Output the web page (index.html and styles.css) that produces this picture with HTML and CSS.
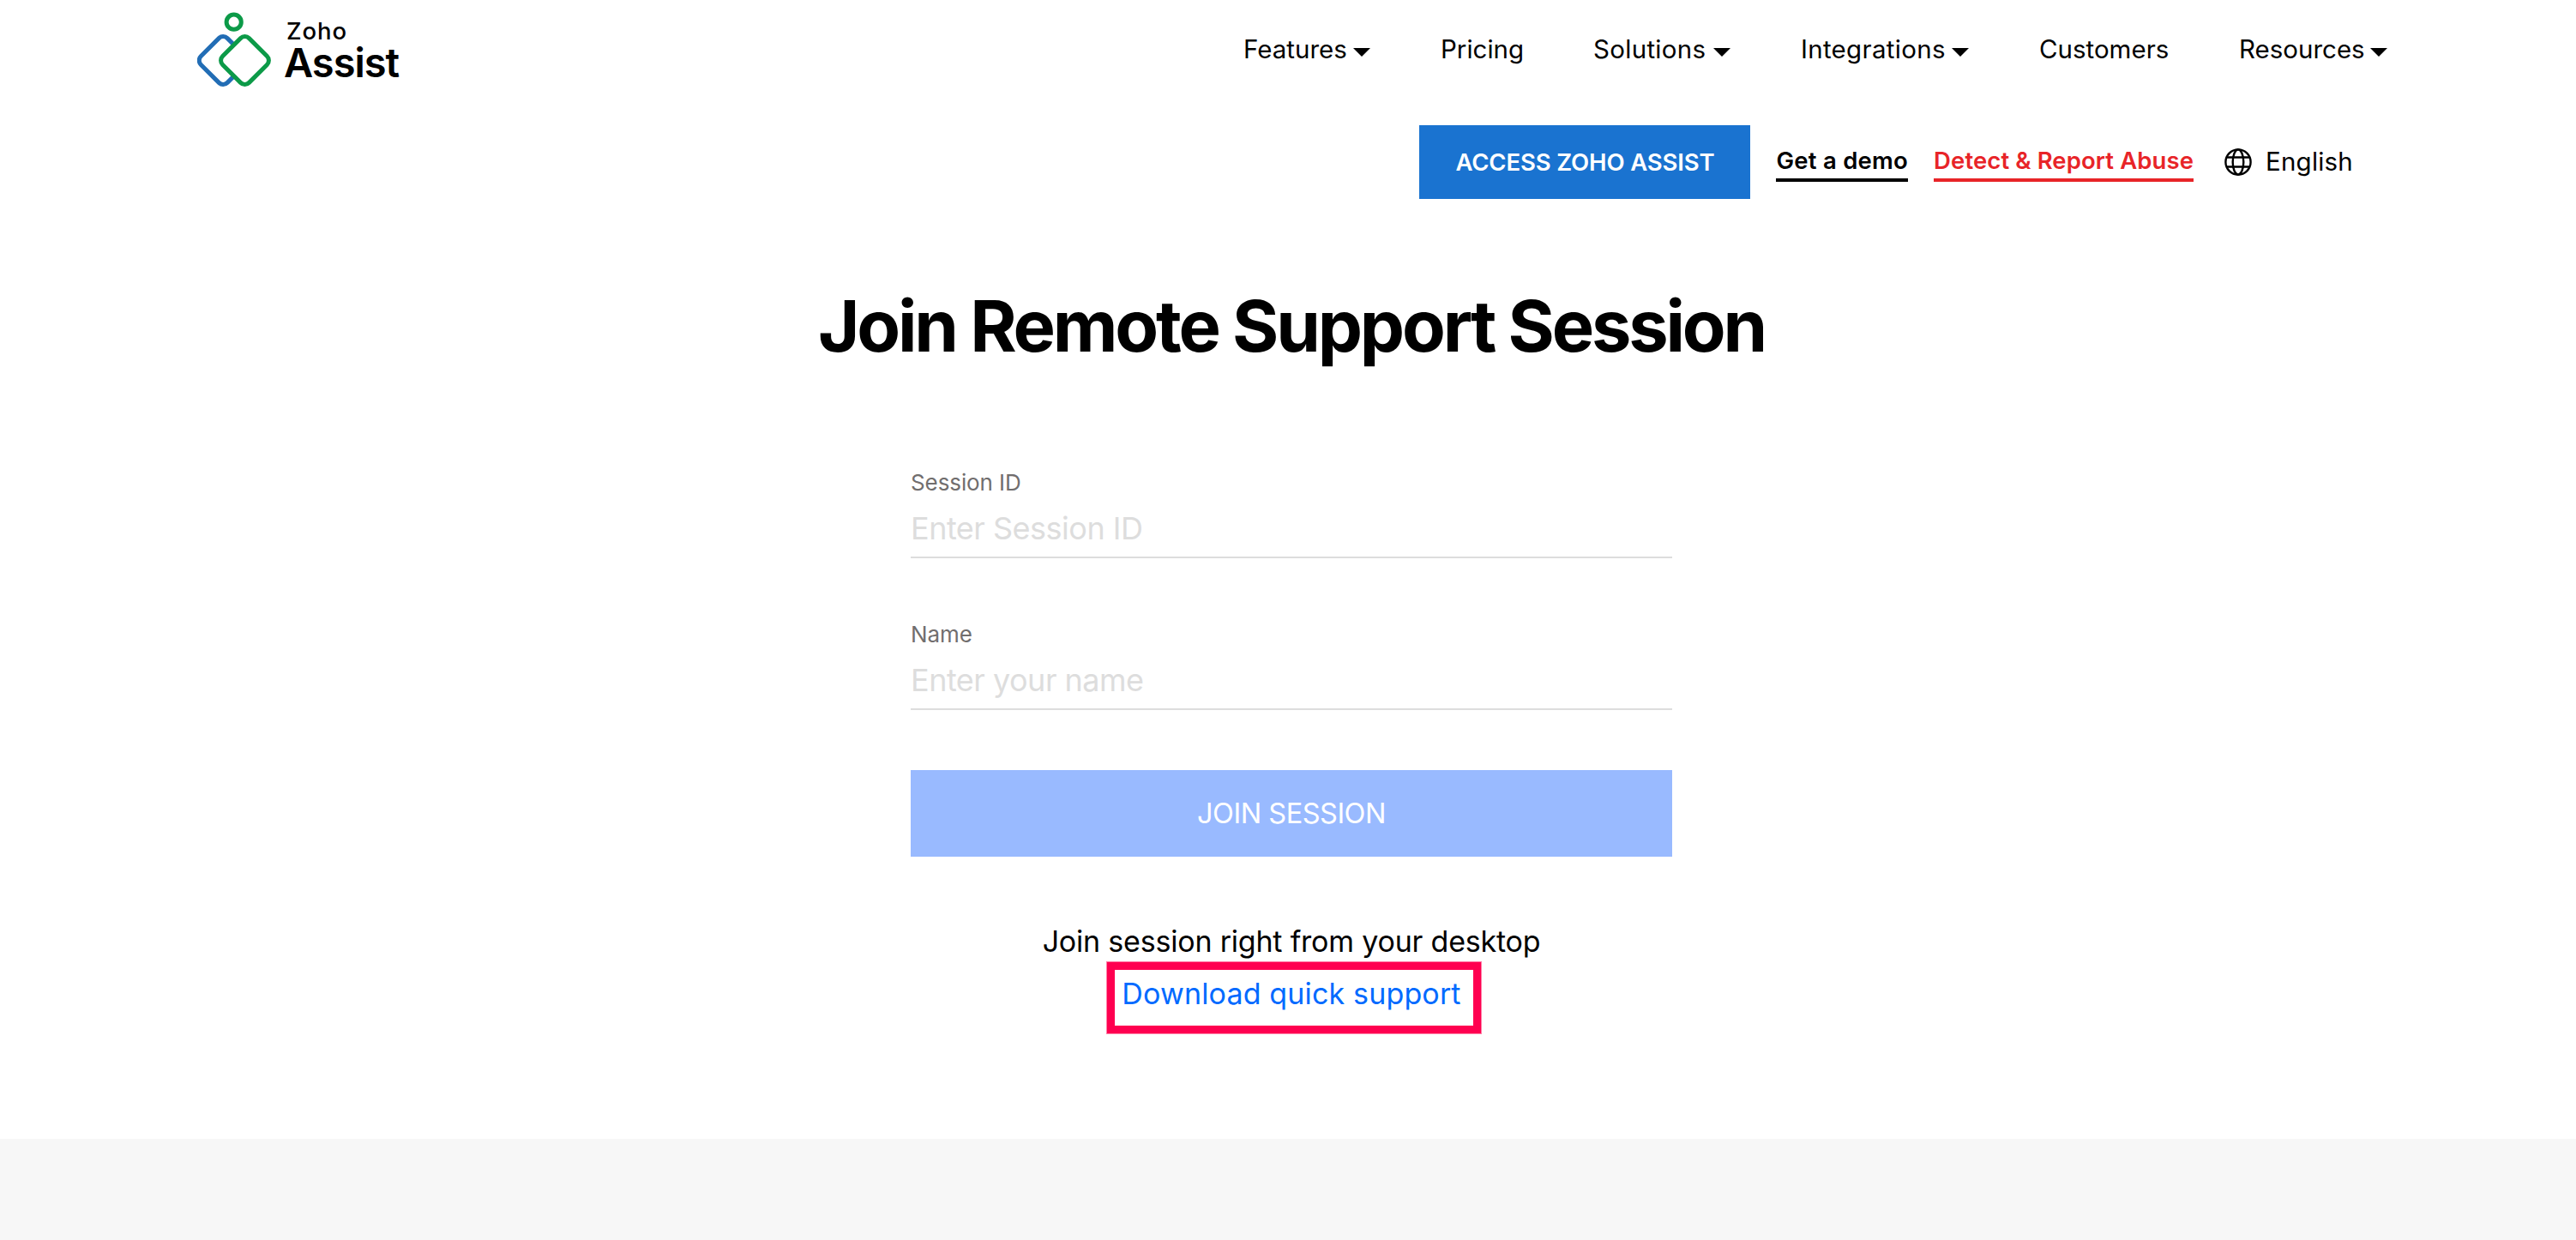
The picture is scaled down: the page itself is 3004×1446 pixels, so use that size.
FILE: index.html
```html
<!DOCTYPE html>
<html lang="en">
<head>
  <meta charset="UTF-8">
  <title>Join Remote Support Session - Zoho Assist</title>
  <link rel="stylesheet" href="styles.css">
</head>
<body>
  <header>
    <div class="top-bar">
      <a class="logo" href="#">
        <svg class="logo-mark" width="88" height="90" viewBox="0 0 88 90" fill="none" stroke-width="5">
          <rect x="8.4" y="36.7" width="43.6" height="43.6" rx="7" stroke="#226db5" transform="rotate(45 30.2 58.5)"/>
          <rect x="33.7" y="36.7" width="43.6" height="43.6" rx="7" stroke="#0c9a48" fill="#fff" transform="rotate(45 55.5 58.5)"/>
          <circle cx="42.7" cy="13.7" r="8.6" stroke="#0c9a48"/>
        </svg>
        <span class="logo-text">
          <span class="logo-zoho">Zoho</span>
          <span class="logo-product">Assist</span>
        </span>
      </a>
      <nav class="main-nav">
        <a class="has-menu" href="#">Features</a>
        <a href="#">Pricing</a>
        <a class="has-menu wide" href="#">Solutions</a>
        <a class="has-menu wide" href="#">Integrations</a>
        <a href="#">Customers</a>
        <a class="has-menu" href="#">Resources</a>
      </nav>
    </div>
    <div class="sub-bar">
      <a class="access-btn" href="#">ACCESS ZOHO ASSIST</a>
      <a class="text-link" href="#">Get a demo</a>
      <a class="text-link abuse" href="#">Detect &amp; Report Abuse</a>
      <a class="language" href="#">
        <svg width="32" height="32" viewBox="0 0 32 32" fill="none" stroke="#000" stroke-width="2.4">
          <circle cx="16" cy="16" r="14.6"/>
          <ellipse cx="16" cy="16" rx="6.3" ry="14.6"/>
          <path d="M3 10.5h26M3 21.5h26"/>
        </svg>
        <span>English</span>
      </a>
    </div>
  </header>

  <main>
    <h1>Join Remote Support Session</h1>
    <form id="joinForm">
      <label for="sessionId">Session ID</label>
      <input type="text" id="sessionId" placeholder="Enter Session ID">
      <label for="userName">Name</label>
      <input type="text" id="userName" placeholder="Enter your name">
      <button type="submit">JOIN SESSION</button>
    </form>
    <p class="desktop-text">Join session right from your desktop</p>
    <a class="download-link" href="#">Download quick support</a>
  </main>

  <footer></footer>
</body>
</html>
```
FILE: styles.css
```css
*, *::after {
  box-sizing: border-box;
}
body {
  font-family: Inter, "Liberation Sans", sans-serif;
  background: #fff;
  color: #000;
  margin: 0;
  min-height: 1446px;
  display: flex;
  flex-direction: column;
}
a {
  color: inherit;
  text-decoration: none;
}

/* header */
.top-bar {
  height: 114px;
  padding-left: 230px;
  display: flex;
  align-items: center;
}
.logo {
  display: flex;
  align-items: center;
  width: 1220px;
}
.logo-text {
  display: flex;
  flex-direction: column;
  margin-left: 13px;
  font-weight: 600;
}
.logo-zoho {
  font-size: 27.5px;
  font-weight: 500;
  line-height: 32px;
  letter-spacing: 0.9px;
  padding-left: 3px;
}
.logo-product {
  font-size: 47px;
  line-height: 42px;
  letter-spacing: -1px;
}
.main-nav {
  display: grid;
  grid-template-columns: 148px 96px 160px 196px 151px 173px;
  column-gap: 82px;
  font-size: 29.5px;
}
.main-nav a {
  display: flex;
  align-items: center;
  justify-content: space-between;
}
.main-nav .wide {
  letter-spacing: 0.3px;
}
.has-menu::after {
  content: "";
  width: 20px;
  margin-top: 8px;
  border: 10px solid transparent;
  border-top-color: #000;
  border-bottom: none;
}
.sub-bar {
  display: flex;
  align-items: center;
  justify-content: flex-end;
  gap: 30px;
  margin-top: 32px;
  padding-right: 260px;
}
.access-btn {
  width: 386px;
  background: #1a73d0;
  color: #fff;
  font-size: 27.5px;
  font-weight: 600;
  line-height: 86px;
  letter-spacing: -0.15px;
  text-align: center;
}
.text-link {
  font-size: 27.5px;
  font-weight: 600;
  line-height: 42px;
  letter-spacing: 0.25px;
  border-bottom: 4px solid #000;
}
.abuse {
  color: #e82428;
  letter-spacing: 0.1px;
  border-color: #e82428;
}
.language {
  display: flex;
  align-items: center;
  gap: 16px;
  margin-left: 6px;
  font-size: 29.5px;
  letter-spacing: 0.2px;
}
.language span {
  line-height: 36px;
  padding-bottom: 2px;
}

/* join form */
main {
  width: 1200px;
  margin: 98px auto 0;
  position: relative;
  left: 4px;
  text-align: center;
}
h1 {
  font-size: 83px;
  font-weight: 700;
  line-height: 100px;
  letter-spacing: -3.2px;
  margin: 0 0 118px;
}
form {
  width: 888px;
  margin: 0 auto;
  text-align: left;
}
label {
  display: block;
  color: #716e6e;
  font-size: 26px;
  line-height: 30px;
  letter-spacing: -0.1px;
}
input {
  display: block;
  width: 100%;
  height: 73px;
  padding: 5px 0 0;
  margin-bottom: 74px;
  border: none;
  border-bottom: 2px solid #ddd;
  background: none;
  font-family: inherit;
  font-size: 36px;
  letter-spacing: -0.5px;
}
input::placeholder {
  color: #ddd;
}
input:focus {
  outline: none;
  border-color: #006aff;
}
button {
  display: block;
  width: 100%;
  height: 101px;
  margin-top: -4px;
  padding: 0;
  border: none;
  background: #99baff;
  color: #fff;
  font-family: inherit;
  font-size: 32.5px;
  letter-spacing: -0.5px;
  cursor: pointer;
}
.desktop-text {
  font-size: 34px;
  line-height: 60px;
  letter-spacing: -0.2px;
  margin: 69px 0 0;
}
.download-link {
  display: inline-block;
  position: relative;
  color: #006aff;
  font-size: 34px;
  line-height: 61px;
  letter-spacing: 0.15px;
}
/* highlight frame around the link */
.download-link::after {
  content: "";
  position: absolute;
  top: -6px;
  left: -17px;
  width: 436px;
  height: 83px;
  border: 9px solid #ff0050;
  box-shadow: 0 0 0 1px #ff005080;
}

footer {
  height: 118px;
  margin-top: auto;
  background: #f7f7f7;
}
```
